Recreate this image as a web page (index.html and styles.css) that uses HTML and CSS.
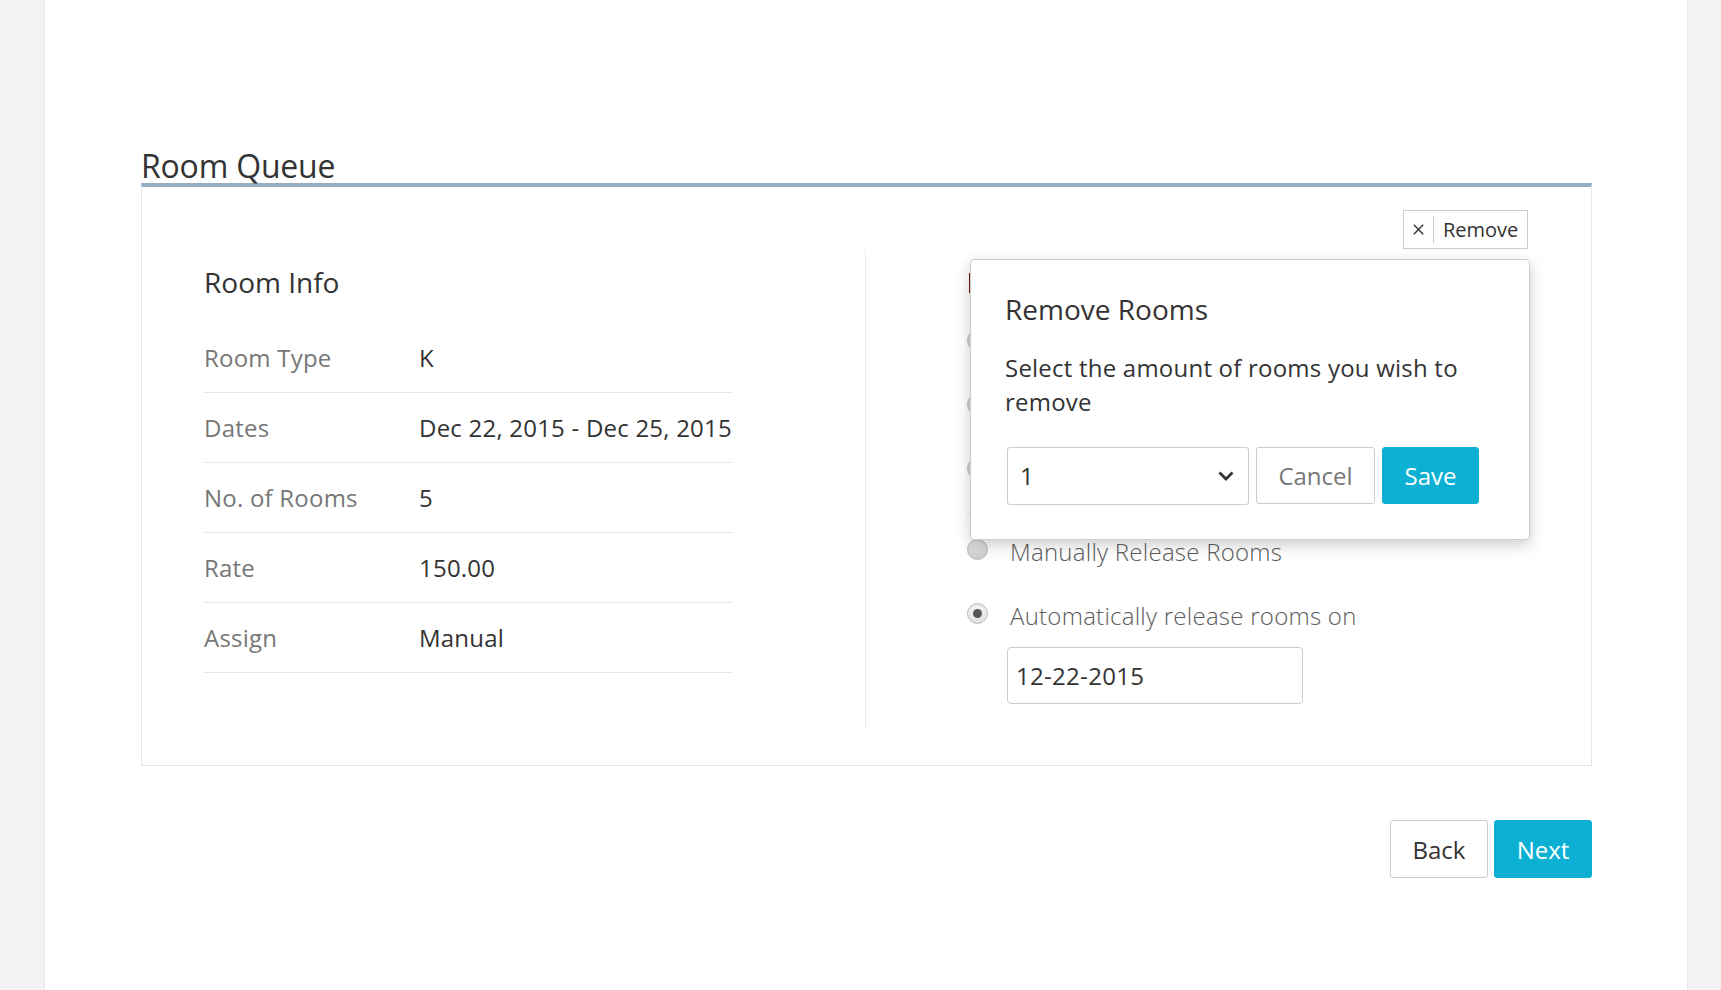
FILE: index.html
```html
<!DOCTYPE html>
<html lang="en">
<head>
<meta charset="utf-8">
<title>Room Queue</title>
<link rel="stylesheet" href="styles.css">
</head>
<body>
<div class="page">
  <h1 class="page-title">Room Queue</h1>
  <section class="card">
    <div class="card-toolbar">
      <div class="remove-wrap">
        <button class="remove-btn" type="button">
          <span class="remove-icon">
            <svg width="11" height="11" viewBox="0 0 11 11"><path d="M0.8 0.8 L10.2 10.2 M10.2 0.8 L0.8 10.2" stroke="#333" stroke-width="1.4" fill="none"/></svg>
          </span>
          <span class="remove-sep"></span>
          <span class="remove-label">Remove</span>
        </button>
        <div class="popover">
          <h2 class="popover-title">Remove Rooms</h2>
          <p class="popover-text">Select the amount of rooms you wish to remove</p>
          <div class="popover-actions">
            <div class="select">
              <span class="select-value">1</span>
              <svg width="16" height="10" viewBox="0 0 16 10"><path d="M1.5 1.5 L8 8 L14.5 1.5" stroke="#333" stroke-width="2.8" fill="none"/></svg>
            </div>
            <button class="btn btn-default btn-cancel" type="button">Cancel</button>
            <button class="btn btn-primary btn-save" type="button">Save</button>
          </div>
        </div>
      </div>
    </div>
    <div class="columns">
      <div class="col col-info">
        <h3 class="section-title">Room Info</h3>
        <dl class="info-list">
          <div class="info-row"><dt>Room Type</dt><dd>K</dd></div>
          <div class="info-row"><dt>Dates</dt><dd>Dec 22, 2015 - Dec 25, 2015</dd></div>
          <div class="info-row"><dt>No. of Rooms</dt><dd>5</dd></div>
          <div class="info-row"><dt>Rate</dt><dd>150.00</dd></div>
          <div class="info-row"><dt>Assign</dt><dd>Manual</dd></div>
        </dl>
      </div>
      <div class="col col-release">
        <div class="release-title"></div>
        <ul class="radio-list">
          <li class="radio-item"><span class="radio"></span></li>
          <li class="radio-item"><span class="radio"></span></li>
          <li class="radio-item"><span class="radio"></span></li>
        </ul>
        <hr class="divider">
        <ul class="radio-list radio-list-bottom">
          <li class="radio-item"><span class="radio"></span><span class="radio-label">Manually Release Rooms</span></li>
          <li class="radio-item"><span class="radio radio-checked"></span><span class="radio-label">Automatically release rooms on</span></li>
        </ul>
        <input class="date-input" type="text" value="12-22-2015">
      </div>
    </div>
  </section>
  <div class="footer-actions">
    <button class="btn btn-default btn-nav" type="button">Back</button>
    <button class="btn btn-primary btn-nav" type="button">Next</button>
  </div>
</div>
</body>
</html>
```

FILE: styles.css
```css
* { box-sizing: border-box; }
html, body { margin: 0; padding: 0; }
body {
  background: #f3f3f3;
  font-family: "Open Sans", "Liberation Sans", sans-serif;
  color: #333;
}
.page {
  margin-left: 44px;
  width: 1644px;
  min-height: 990px;
  background: #fff;
  border-left: 1px solid #e9e9e9;
  border-right: 1px solid #e9e9e9;
  padding: 148px 95px 0 96px;
}
.page-title {
  margin: 0;
  font-size: 32px;
  font-weight: 400;
  line-height: 35px;
  letter-spacing: -0.2px;
  color: #333;
}
.card {
  border: 1px solid #e6e6e6;
  border-top: 4px solid #98adbd;
  padding: 23px 63px 35px 62px;
}
.card-toolbar {
  display: flex;
  justify-content: flex-end;
  height: 39px;
}
.remove-wrap { position: relative; }
.remove-btn {
  display: flex;
  align-items: center;
  width: 125px;
  height: 39px;
  padding: 0;
  border: 1px solid #ccc;
  background: #fff;
  font-family: inherit;
  font-size: 20px;
  color: #333;
}
.remove-icon {
  width: 29px;
  display: flex;
  justify-content: center;
  align-items: center;
}
.remove-icon svg { display: block; }
.remove-sep {
  width: 1px;
  height: 27px;
  background: #ccc;
}
.remove-label {
  padding-left: 9px;
  line-height: 37px;
}
.popover {
  position: absolute;
  right: -2px;
  top: 49px;
  width: 560px;
  background: #fff;
  border: 1px solid #ccc;
  border-radius: 4px;
  box-shadow: 0 5px 15px rgba(0, 0, 0, 0.2);
  padding: 29px 36px 34px 34px;
  z-index: 10;
}
.popover-title {
  margin: 0 0 22px;
  font-size: 28px;
  font-weight: 400;
  line-height: 40px;
  color: #333;
}
.popover-text {
  margin: 0 0 27px;
  font-size: 24px;
  line-height: 34.3px;
  letter-spacing: 0.22px;
  color: #333;
}
.popover-actions {
  display: flex;
  align-items: flex-start;
  gap: 7px;
  margin-left: 2px;
}
.select {
  width: 242px;
  height: 58px;
  border: 1px solid #ccc;
  border-radius: 3px;
  display: flex;
  align-items: center;
  justify-content: space-between;
  padding: 0 14px 0 12px;
  font-size: 24px;
  color: #333;
}
.select svg { display: block; }
.btn {
  font-family: inherit;
  font-size: 24px;
  height: 57px;
  padding: 0;
  border-radius: 3px;
  border: 1px solid #ccc;
  background: #fff;
  color: #333;
}
.btn-primary {
  background: #0cb0d3;
  border-color: #0cb0d3;
  color: #fff;
}
.btn-cancel { width: 119px; color: #777; }
.btn-save { width: 97px; }
.columns {
  display: grid;
  grid-template-columns: 1fr 1fr;
  margin-top: 1px;
}
.col { padding-bottom: 26px; }
.col-info { border-right: 1px solid #ececec; }
.col-release { padding-left: 101px; }
.section-title {
  margin: 12px 0 21px;
  font-size: 28px;
  font-weight: 400;
  line-height: 40px;
  color: #333;
}
.release-title {
  margin: 23px 0 30px 2px;
  width: 3px;
  height: 20px;
  background: #7d1808;
}
.info-list {
  width: 80%;
  margin: 0;
}
.info-row {
  display: grid;
  grid-template-columns: 215px 1fr;
  padding: 18px 0 17px;
  border-bottom: 1px solid #e8e8e8;
  font-size: 24px;
  line-height: 34px;
  letter-spacing: 0.22px;
}
.info-row dt { color: #777; }
.info-row dd { margin: 0; color: #333; }
.radio-list {
  list-style: none;
  margin: 0;
  padding: 3px 0 0;
}
.radio-list-bottom { padding-top: 0; }
.radio-item {
  display: flex;
  align-items: flex-start;
  gap: 22px;
  height: 34px;
  margin-bottom: 30px;
  font-size: 24px;
  font-weight: 300;
  line-height: 34px;
  letter-spacing: 0.25px;
  color: #5c5c5c;
}
.radio-item:last-child { margin-bottom: 0; }
.radio {
  flex: none;
  width: 21px;
  height: 21px;
  margin-top: 4px;
  border-radius: 50%;
  border: 1px solid #b9b9b9;
  background: linear-gradient(#e4e4e4, #cdcdcd);
  box-shadow: inset 0 1px 2px rgba(0, 0, 0, 0.08);
  position: relative;
}
.radio-checked {
  background: linear-gradient(#f4f4f4, #e2e2e2);
}
.radio-checked::after {
  content: "";
  position: absolute;
  left: 5px;
  top: 5px;
  width: 9px;
  height: 9px;
  border-radius: 50%;
  background: #555;
}
.divider {
  border: 0;
  border-top: 1px solid #e5e5e5;
  margin: 25px 0 21px;
  width: 80%;
}
.date-input {
  display: block;
  margin: 14px 0 0 40px;
  width: 296px;
  height: 57px;
  border: 1px solid #ccc;
  border-radius: 4px;
  padding: 0 8px;
  font-family: inherit;
  font-size: 24px;
  letter-spacing: 0.3px;
  color: #333;
}
.footer-actions {
  display: flex;
  justify-content: flex-end;
  gap: 6px;
  margin-top: 54px;
}
.btn-nav {
  width: 98px;
  height: 58px;
}
```
